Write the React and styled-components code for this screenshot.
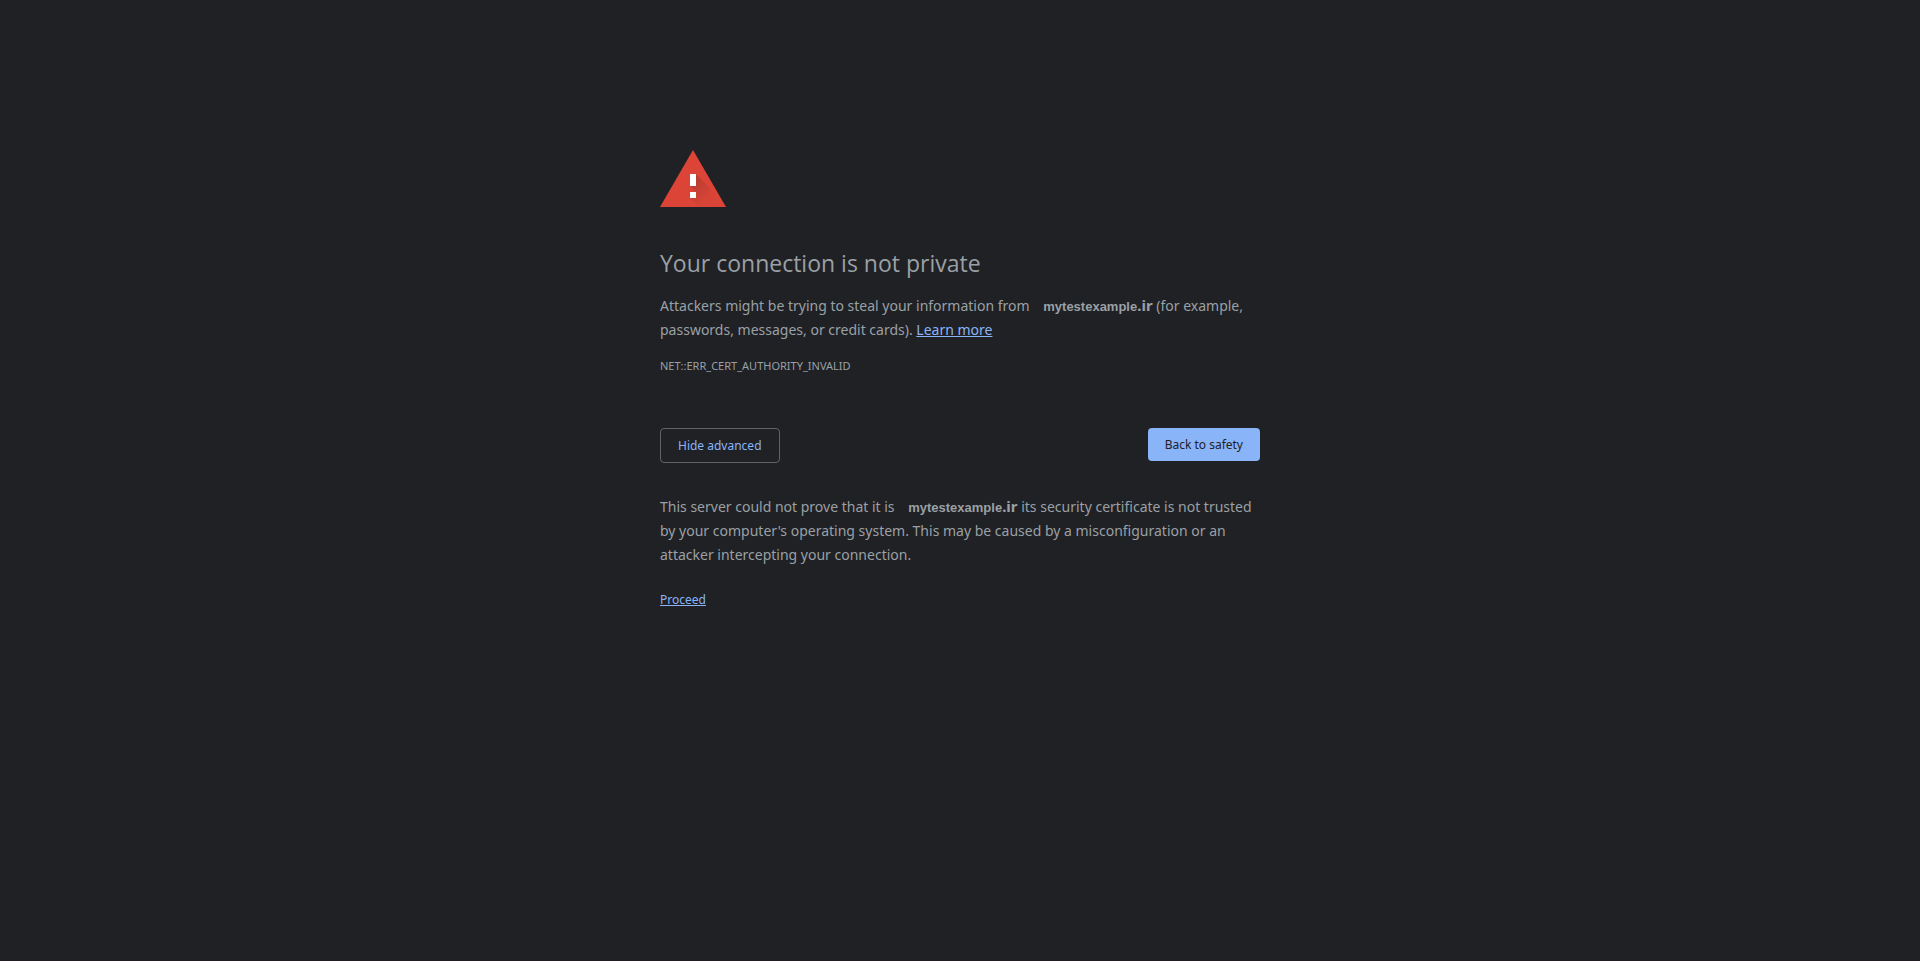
import React, { useState } from "react";
import styled, { createGlobalStyle } from "styled-components";

function WarningIcon() {
	return (
		<svg width="72" height="72" viewBox="0 0 72 72" role="img" aria-label="Warning">
			<defs>
				<linearGradient id="shade" gradientUnits="userSpaceOnUse" x1="30" y1="42" x2="49" y2="61">
					<stop offset="0" stopColor="#3e2723" stopOpacity="0.28" />
					<stop offset="1" stopColor="#3e2723" stopOpacity="0.02" />
				</linearGradient>
			</defs>
			<path fill="#db4437" d="M0 72h66L33 15z" />
			<path fill="url(#shade)" d="M36 39l14 14 11 19H39l-9-9 6-6-6-6z" />
			<path fill="#fff" d="M30 39h6v12h-6zM30 57h6v6h-6z" />
		</svg>
	);
}

function App() {
	const [Advanced, setAdvanced] = useState(true);

	return (
		<>
			<GlobalStyle />
			<Page>
				<Content>
					<WarningIcon />
					<Title>Your connection is not private</Title>
					<Message>
						Attackers might be trying to steal your information from{" "}
						<Site>
							<span>mytestexample</span>.ir
						</Site>{" "}
						(for example, passwords, messages, or credit cards). <Link href="#learn-more">Learn more</Link>
					</Message>
					<ErrorCode>NET::ERR_CERT_AUTHORITY_INVALID</ErrorCode>
					<Buttons>
						<Button type="button" onClick={() => setAdvanced(!Advanced)}>
							{Advanced ? "Hide advanced" : "Advanced"}
						</Button>
						<Button type="button" $primary>
							Back to safety
						</Button>
					</Buttons>
					{Advanced && (
						<Details>
							<Message>
								This server could not prove that it is{" "}
								<Site>
									<span>mytestexample</span>.ir
								</Site>{" "}
								its security certificate is not trusted by your computer's operating system. This may be caused by a
								misconfiguration or an attacker intercepting your connection.
							</Message>
							<Proceed>
								<Link href="#proceed">Proceed</Link>
							</Proceed>
						</Details>
					)}
				</Content>
			</Page>
		</>
	);
}

const GlobalStyle = createGlobalStyle`
	body {
		margin: 0;
		background: #202124;
		color: #9aa0a6;
		font-family: "Noto Sans", "Open Sans", sans-serif;
	}
`;

const Page = styled.main`
	box-sizing: border-box;
	min-height: 100vh;
	padding: 14vh 24px 24px;
	border-bottom: 1px solid #231c24;
`;

const Content = styled.div`
	max-width: 600px;
	margin: 0 auto;
	> svg {
		display: block;
	}
`;

const Title = styled.h1`
	margin: 40px 0 15px;
	font-family: "Open Sans", "Noto Sans", sans-serif;
	font-size: 23px;
	font-weight: 400;
	line-height: 32px;
`;

const Message = styled.p`
	margin: 0;
	font-size: 14px;
	line-height: 24px;
`;

const Site = styled.strong`
	margin-left: 10px;
	font-size: 15px;
	font-weight: 700;
	line-height: 1;
	span {
		font-family: "Liberation Sans", Arial, sans-serif;
		font-size: 13px;
	}
`;

const Link = styled.a`
	color: #8ab4f8;
`;

const ErrorCode = styled.div`
	margin-top: 12px;
	font-size: 11px;
	line-height: 24px;
`;

const Buttons = styled.div`
	display: flex;
	align-items: flex-start;
	justify-content: space-between;
	margin-top: 50px;
`;

const Button = styled.button`
	padding: 8px 17px;
	border: ${(props) => (props.$primary ? "0" : "1px solid #5f6368")};
	border-radius: 4px;
	background: ${(props) => (props.$primary ? "#8ab4f8" : "transparent")};
	color: ${(props) => (props.$primary ? "#202124" : "#8ab4f8")};
	font-family: inherit;
	font-size: 12px;
	line-height: 17px;
	cursor: pointer;
`;

const Details = styled.div`
	margin-top: 32px;
`;

const Proceed = styled.p`
	margin: 21px 0 0;
	font-size: 12px;
	line-height: 24px;
`;

export default App;
